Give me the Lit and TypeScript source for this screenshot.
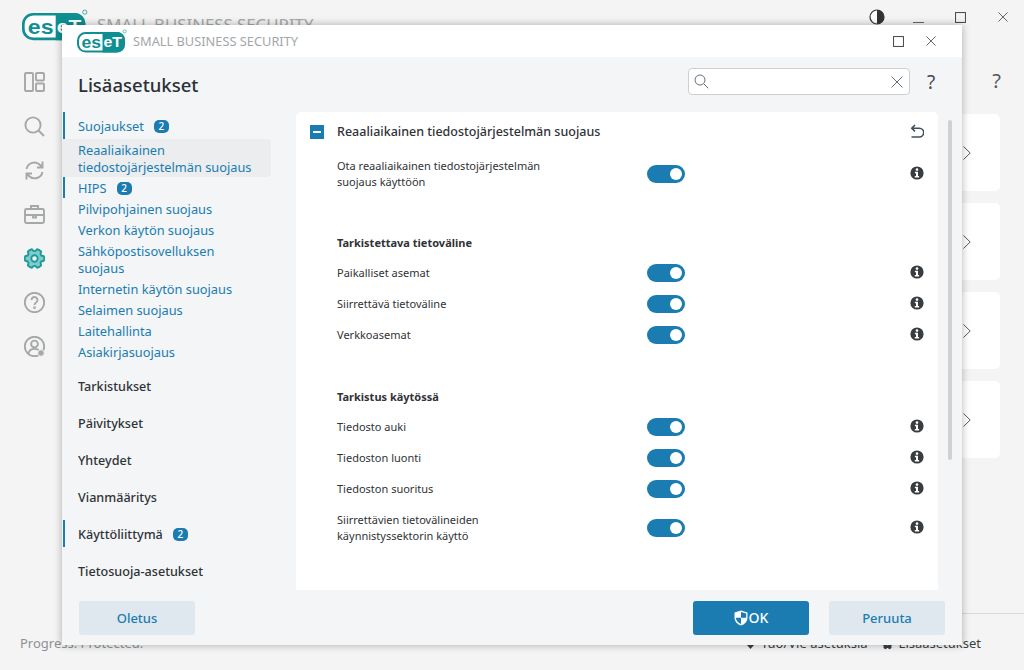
import { LitElement, css, html, svg } from "lit";
import { customElement } from "lit/decorators.js";

const logo = (w: number) => html`<svg class="logo" width=${w} viewBox="0 0 50 24" height=${(w * 24) / 50}>
  <circle cx="47.6" cy="2.4" r="1.6" fill="none" stroke="#1d9a9c" stroke-width=".6"></circle>
  <rect x="1" y="4" width="46" height="18.6" rx="7.5" fill="#fff" stroke="#0f8f92" stroke-width="2"></rect>
  <path d="M25.5 3H40a8 8 0 0 1 8 8v4.6a8 8 0 0 1-8 8H25.5z" fill="#0f8f92"></path>
  <text x="4.4" y="18.6" font-family="Liberation Sans" font-weight="700" font-size="16" fill="#0f8f92" textLength="19.5" lengthAdjust="spacingAndGlyphs">es</text>
  <text x="26.4" y="18.4" font-family="Liberation Sans" font-weight="700" font-size="14" fill="#fff" textLength="18.5" lengthAdjust="spacingAndGlyphs">eT</text>
</svg>`;

const info = html`<svg class="info" viewBox="0 0 14 14" width="14" height="14">
  <circle cx="7" cy="7" r="6.6" fill="#3a3d40"></circle>
  <circle cx="7" cy="3.6" r="1.3" fill="#fff"></circle>
  <path d="M4.9 5.8H8v4.2h1.1v1.4H4.8V10h1.2V7.2H4.9z" fill="#fff"></path>
</svg>`;

// six lobed gear outline for the selected item of the back nav
const gearPath = () => {
  const pts: string[] = [];
  for (let i = 0; i < 6; i++) {
    const a = (i * Math.PI) / 3;
    const at = (r: number, d: number) =>
      `${(10.5 + r * Math.cos(a + d)).toFixed(2)} ${(10.5 + r * Math.sin(a + d)).toFixed(2)}`;
    pts.push(`${i ? "L" : "M"}${at(7.4, -0.42)}L${at(9.6, -0.24)}Q${at(10.2, 0)} ${at(9.6, 0.24)}L${at(7.4, 0.42)}`);
  }
  return pts.join("") + "Z";
};

const navIcons = [
  svg`<rect x="1" y="1" width="8" height="18" rx="1"/><rect x="12" y="1" width="8" height="7.5" rx="1"/><rect x="12" y="11.5" width="8" height="7.5" rx="1"/>`,
  svg`<circle cx="9" cy="9" r="7.6"/><path d="M14.5 14.5l5.5 5.5"/>`,
  svg`<path d="M2.5 9a8 8 0 0 1 13.6-4L18 7M18.5 1.5V7.5H13M18.5 12A8 8 0 0 1 5 16L3 14M2.5 19.5V13.5H8"/>`,
  svg`<rect x="1" y="5" width="19" height="14" rx="1.5"/><path d="M7 5V2h7v3M1 11h19M9 11v2.5h3V11"/>`,
  svg`<path class="gear" d=${gearPath()}/><circle class="gear-c" cx="10.5" cy="10.5" r="3.2"/>`,
  svg`<circle cx="10.5" cy="10.5" r="9.7"/><path d="M7.5 8a3 3 0 1 1 4.6 2.5c-1 .6-1.6 1.1-1.6 2.5"/><circle cx="10.5" cy="15.8" r=".5"/>`,
  svg`<circle cx="10.5" cy="10.5" r="9.7"/><circle cx="10.5" cy="8" r="3.4"/><path d="M4.5 17.5c.6-3.4 3-4.6 6-4.6 2 0 3.3.4 4.2 1.2"/><circle class="dot" cx="17" cy="17" r="3.2"/>`,
];

@customElement("app-root")
export class AppRoot extends LitElement {
  static styles = css`
    :host {
      display: block;
      position: relative;
      width: 1024px;
      height: 670px;
      overflow: hidden;
      background: #f4f4f4;
      font-family: "Noto Sans", sans-serif;
      color: #2f3336;
    }
    /* app behind the dialog */
    .back {
      height: 670px;
      display: flex;
      flex-direction: column;
    }
    .back-head {
      display: flex;
      align-items: center;
      height: 50px;
      padding-left: 22px;
      gap: 9px;
      position: relative;
    }
    .back-title {
      font-size: 16.8px;
      line-height: 14px;
      color: #a7a9ab;
    }
    .win-btns {
      position: absolute;
      top: 9px;
      left: 869px;
      display: flex;
      align-items: center;
    }
    .back-main {
      flex: 1;
      display: flex;
      justify-content: space-between;
      padding: 22px 24px 0 24px;
    }
    .back-nav {
      display: flex;
      flex-direction: column;
      gap: 23px;
    }
    .back-nav svg {
      display: block;
      width: 21px;
      height: 21px;
      fill: none;
      stroke: #a5a7a9;
      stroke-width: 1.9;
    }
    .back-nav .gear {
      fill: #7fcccb;
      stroke: #1d9a9c;
      stroke-linejoin: round;
    }
    .back-nav .gear-c {
      fill: #f4f4f4;
      stroke: #1d9a9c;
    }
    .back-nav .dot {
      fill: #a5a7a9;
      stroke: #f4f4f4;
      stroke-width: 0.8;
    }
    .back-right {
      width: 64px;
      display: flex;
      flex-direction: column;
      align-items: flex-end;
    }
    .back-q {
      font-size: 20px;
      line-height: 24px;
      color: #55585b;
      margin-right: -1px;
      margin-top: -3px;
      margin-bottom: 21px;
    }
    .cards {
      display: flex;
      flex-direction: column;
      gap: 12px;
    }
    .card {
      width: 64px;
      height: 77px;
      background: #fff;
      border-radius: 5px;
      display: flex;
      align-items: center;
      justify-content: flex-end;
      padding-right: 29px;
      box-sizing: border-box;
    }
    .back-foot {
      height: 56px;
      border-top: 1px solid #d9d9d9;
      margin-left: 962px;
    }
    .back-status {
      position: absolute;
      left: 20px;
      top: 634px;
      font-size: 13px;
      color: #8e9193;
    }
    .back-links {
      position: absolute;
      left: 745px;
      top: 634px;
      font-size: 13px;
      color: #3b3e41;
      display: flex;
      align-items: center;
      gap: 5px;
    }
    .back-links span {
      margin-right: 8px;
    }

    /* dialog */
    .dialog {
      position: absolute;
      left: 62px;
      top: 25px;
      width: 900px;
      height: 620px;
      background: #f3f5f7;
      box-shadow: 0 0 8px rgba(0, 0, 0, 0.3);
      display: flex;
      flex-direction: column;
    }
    .d-head {
      height: 32px;
      flex: none;
      background: #fff;
      display: flex;
      align-items: center;
      padding-left: 15px;
      gap: 6px;
    }
    .d-brand {
      font-size: 12.8px;
      color: #a3a6a9;
      flex: 1;
    }
    .d-btns {
      display: flex;
      align-items: center;
      gap: 22px;
      padding-right: 26px;
    }
    .d-title {
      height: 55px;
      flex: none;
      display: flex;
      align-items: center;
      padding: 0 10px 0 16px;
    }
    .d-title h1 {
      margin: 0;
      flex: 1;
      font-size: 18.5px;
      font-weight: 500;
      color: #2c3136;
    }
    .search {
      height: 25px;
      background: #fff;
      border: 1px solid #cdd0d2;
      border-radius: 4px;
      display: flex;
      align-items: center;
      justify-content: space-between;
      padding: 0 6px 0 5px;
      width: 209px;
      margin-top: -6px;
    }
    .q {
      width: 42px;
      text-align: center;
      font-size: 19px;
      color: #46494c;
      margin-top: -5px;
    }
    .d-main {
      flex: 1;
      min-height: 0;
      display: flex;
    }
    nav {
      width: 234px;
      flex: none;
      font-size: 12.8px;
      line-height: 17px;
      color: #1a7cb0;
      overflow: hidden;
    }
    .n {
      display: flex;
      align-items: center;
      gap: 10px;
      padding: 1px 0 0 16px;
      width: 209px;
      height: 21px;
      box-sizing: border-box;
      position: relative;
    }
    .n.tall {
      height: 38px;
    }
    .n.sel {
      background: #ebedef;
      border-radius: 0 4px 4px 0;
    }
    .n.top {
      height: 37px;
      color: #2f3336;
      font-weight: 500;
      font-size: 12.6px;
    }
    .n.bar::before {
      content: "";
      position: absolute;
      left: 1px;
      top: 0;
      bottom: 0;
      width: 2px;
      background: #1a7cb0;
    }
    .badge {
      background: #1a7cb0;
      color: #fff;
      font-size: 10px;
      font-weight: 500;
      line-height: 13px;
      width: 15px;
      height: 13px;
      border-radius: 5px;
      text-align: center;
    }
    .panel {
      width: 642px;
      flex: none;
      background: #fff;
      border-radius: 5px 5px 0 0;
      box-sizing: border-box;
      padding: 0 14px;
      font-size: 11px;
      line-height: 16px;
    }
    .p-head {
      height: 38px;
      display: flex;
      align-items: center;
      padding-top: 2px;
      box-sizing: border-box;
      font-size: 12.5px;
      font-weight: 500;
    }
    .minus {
      width: 14px;
      height: 14px;
      background: #1a7cb0;
      position: relative;
      margin-right: 13px;
      flex: none;
    }
    .minus::after {
      content: "";
      position: absolute;
      left: 3px;
      right: 3px;
      top: 6px;
      height: 2px;
      background: #fff;
    }
    .p-title {
      flex: 1;
    }
    .row {
      display: flex;
      align-items: center;
      padding: 7.5px 0 7.5px 27px;
    }
    .row .label {
      width: 310px;
      flex: none;
    }
    .row .spacer {
      flex: 1;
    }
    h3 {
      margin: 38px 0 6.5px 27px;
      font-size: 11px;
      line-height: 16px;
      font-weight: 700;
    }
    .toggle {
      width: 38px;
      height: 18px;
      margin: -1px 0;
      border-radius: 9px;
      background: #1a7cb0;
      flex: none;
      display: flex;
      align-items: center;
      justify-content: flex-end;
      padding-right: 3px;
      box-sizing: border-box;
    }
    .toggle::after {
      content: "";
      width: 12px;
      height: 12px;
      border-radius: 50%;
      background: #fff;
    }
    .info {
      margin: -2px 0 0;
    }
    .track {
      flex: 1;
      display: flex;
      justify-content: center;
      padding-top: 8px;
    }
    .thumb {
      width: 4px;
      height: 340px;
      border-radius: 2px;
      background: #cfd1d3;
    }
    .d-foot {
      height: 55px;
      flex: none;
      display: flex;
      align-items: center;
      padding: 0 17px;
      gap: 20px;
    }
    .btn {
      width: 116px;
      height: 34px;
      border-radius: 3px;
      background: #dfe8ef;
      color: #1a7cb0;
      font: 500 13px "Noto Sans", sans-serif;
      display: flex;
      align-items: center;
      justify-content: center;
      gap: 1px;
      box-sizing: border-box;
    }
    .btn.primary {
      background: #1a7cb0;
      color: #fff;
      font-size: 14px;
    }
    .btn.first {
      margin-right: auto;
    }
    svg {
      display: block;
      flex: none;
    }
  `;

  row(label: unknown) {
    return html`<div class="row">
      <div class="label">${label}</div>
      <div class="toggle"></div>
      <div class="spacer"></div>
      ${info}
    </div>`;
  }

  x(size: number, color: string) {
    return html`<svg width=${size} height=${size} viewBox="0 0 12 12" fill="none" stroke=${color} stroke-width="1"><path d="M.5.5l11 11M11.5.5l-11 11"></path></svg>`;
  }

  square(size: number) {
    return html`<svg width=${size} height=${size} viewBox="0 0 12 12" fill="none" stroke="#46494c" stroke-width="1.1"><rect x=".6" y=".6" width="10.8" height="10.8"></rect></svg>`;
  }

  chevron() {
    return html`<svg width="8" height="14" viewBox="0 0 8 14" fill="none" stroke="#55585b" stroke-width="1"><path d="M.5.5L7.2 7 .5 13.5"></path></svg>`;
  }

  render() {
    return html`
      <div class="back">
        <div class="back-head">
          ${logo(66)}
          <span class="back-title">SMALL BUSINESS SECURITY</span>
          <div class="win-btns">
            <svg width="16" height="16" viewBox="0 0 16 16" style="margin-right:28px">
              <circle cx="8" cy="8" r="7" fill="#fff" stroke="#333" stroke-width="1.2"></circle>
              <path d="M8 1a7 7 0 0 1 0 14z" fill="#333"></path>
            </svg>
            <div style="width:11px;height:11px;border-bottom:1px solid #666;margin-right:31px"></div>
            ${this.square(11)}
            <div style="width:32px"></div>
            ${this.x(10, "#46494c")}
          </div>
        </div>
        <div class="back-main">
          <div class="back-nav">
            ${navIcons.map((p) => html`<svg viewBox="0 0 21 21">${p}</svg>`)}
          </div>
          <div class="back-right">
            <div class="back-q">?</div>
            <div class="cards">
              ${[0, 1, 2, 3].map(() => html`<div class="card">${this.chevron()}</div>`)}
            </div>
          </div>
        </div>
        <div class="back-foot"></div>
      </div>
      <div class="back-status">Progress. Protected.</div>
      <div class="back-links">
        <svg width="11" height="14" viewBox="0 0 11 14" fill="#3b3e41"><path d="M4.5 1h2v8H9L5.5 13 2 9h2.5z"></path></svg>
        <span>Tuo/Vie asetuksia</span>
        <svg width="13" height="13" viewBox="0 0 21 21" fill="#3b3e41"><path d=${gearPath()}></path><circle cx="10.5" cy="10.5" r="3" fill="#f4f4f4"></circle></svg>
        <span>Lisäasetukset</span>
      </div>

      <div class="dialog">
        <div class="d-head">
          ${logo(50)}
          <span class="d-brand">SMALL BUSINESS SECURITY</span>
          <div class="d-btns">${this.square(11)}${this.x(10, "#46494c")}</div>
        </div>
        <div class="d-title">
          <h1>Lisäasetukset</h1>
          <div class="search">
            <svg width="15" height="15" viewBox="0 0 15 15" fill="none" stroke="#6a6d70" stroke-width="1"><circle cx="6" cy="6" r="5"></circle><path d="M9.8 9.8l4.5 4.5"></path></svg>
            ${this.x(12, "#6a6d70")}
          </div>
          <div class="q">?</div>
        </div>
        <div class="d-main">
          <nav>
            <div class="n bar" style="height:27px">Suojaukset <span class="badge">2</span></div>
            <div class="n tall sel"><span>Reaaliaikainen<br />tiedostojärjestelmän suojaus</span></div>
            <div class="n bar">HIPS <span class="badge">2</span></div>
            <div class="n">Pilvipohjainen suojaus</div>
            <div class="n">Verkon käytön suojaus</div>
            <div class="n tall"><span>Sähköpostisovelluksen<br />suojaus</span></div>
            <div class="n">Internetin käytön suojaus</div>
            <div class="n">Selaimen suojaus</div>
            <div class="n">Laitehallinta</div>
            <div class="n">Asiakirjasuojaus</div>
            <div class="n top" style="margin-top:5px">Tarkistukset</div>
            <div class="n top">Päivitykset</div>
            <div class="n top">Yhteydet</div>
            <div class="n top">Vianmääritys</div>
            <div class="n top bar" style="height:27px;margin-top:5px;margin-bottom:5px">Käyttöliittymä <span class="badge">2</span></div>
            <div class="n top">Tietosuoja-asetukset</div>
          </nav>
          <div class="panel">
            <div class="p-head">
              <div class="minus"></div>
              <div class="p-title">Reaaliaikainen tiedostojärjestelmän suojaus</div>
              <svg width="14" height="16" viewBox="0 0 14 16" fill="none" stroke="#3f4f5c" stroke-width="1.6"><path d="M5 1L1.8 4.2 5 7.4M2 4.2h7.3a3.9 3.9 0 0 1 0 8.8H1.5"></path></svg>
            </div>
            ${this.row(html`Ota reaaliaikainen tiedostojärjestelmän<br />suojaus käyttöön`)}
            <h3>Tarkistettava tietoväline</h3>
            ${this.row("Paikalliset asemat")}
            ${this.row("Siirrettävä tietoväline")}
            ${this.row("Verkkoasemat")}
            <h3>Tarkistus käytössä</h3>
            ${this.row("Tiedosto auki")}
            ${this.row("Tiedoston luonti")}
            ${this.row("Tiedoston suoritus")}
            ${this.row(html`Siirrettävien tietovälineiden<br />käynnistyssektorin käyttö`)}
          </div>
          <div class="track"><div class="thumb"></div></div>
        </div>
        <div class="d-foot">
          <div class="btn first">Oletus</div>
          <div class="btn primary">
            <svg width="14" height="16" viewBox="0 0 14 16">
              <path d="M7 .5L13.5 2.5V7.5C13.5 11.5 10.5 14.5 7 15.5 3.5 14.5.5 11.5.5 7.5V2.5z" fill="#fff"></path>
              <path d="M7 2V7.8H12.2V3.6zM7 7.8H1.8C2 10.8 4.2 13 7 14z" fill="#1a7cb0"></path>
            </svg>
            OK
          </div>
          <div class="btn">Peruuta</div>
        </div>
      </div>
    `;
  }
}
